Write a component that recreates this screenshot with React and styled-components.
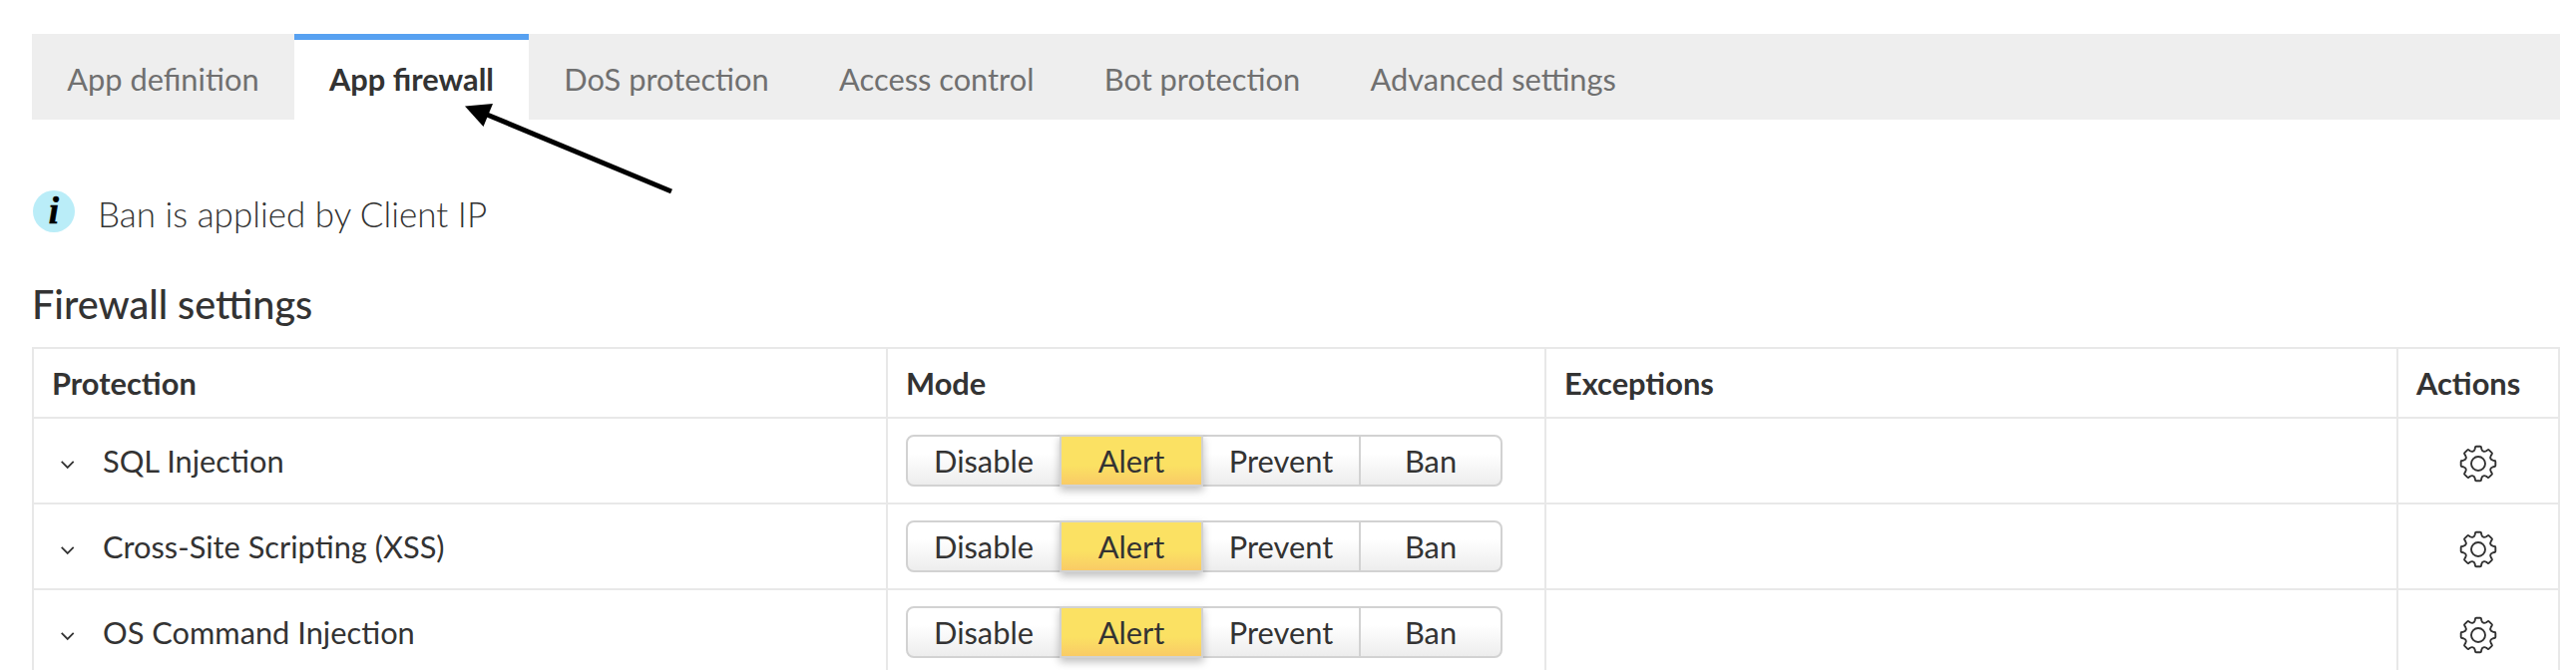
import React from "react";
import styled, { createGlobalStyle, css } from "styled-components";

const GlobalStyle = createGlobalStyle`
  *, *::before, *::after { box-sizing: border-box; }
  body {
    margin: 0;
    background: #fff;
    color: #333;
    font-family: Lato, "Open Sans", sans-serif;
    font-size: 30.8px;
    line-height: 40px;
  }
`;

const Page = styled.main`
  position: relative;
  height: 672px;
  overflow: hidden;
  padding: 34px 16px 0 32px;
`;

const TabBar = styled.nav`
  display: flex;
  height: 86px;
  background: #eee;
`;

const Tab = styled.button`
  border: 0;
  border-top: 6px solid transparent;
  padding: 0 35.2px;
  background: none;
  color: #707070;
  font: inherit;
  white-space: nowrap;
  ${(p) =>
    p.$active &&
    css`
      border-top-color: #57a1f1;
      background: #fff;
      color: #333;
      font-weight: 700;
    `}
`;

const Pointer = styled.svg`
  position: absolute;
  left: 460px;
  top: 98px;
`;

const Notice = styled.div`
  display: flex;
  align-items: center;
  margin-top: 71px;
  height: 42px;
`;

const InfoBadge = styled.span`
  display: flex;
  align-items: center;
  justify-content: center;
  width: 42px;
  height: 42px;
  margin-left: 1px;
  border-radius: 50%;
  background: #baedf8;
  color: #000;
  font: italic 700 37px/42px "Liberation Serif", serif;
  -webkit-text-stroke: 0.6px #000;
`;

const NoticeText = styled.span`
  margin-left: 23px;
  padding-top: 4px;
  font-size: 35px;
  font-weight: 300;
`;

const Heading = styled.h2`
  margin: 48px 0 0;
  height: 67px;
  font-size: 39.6px;
  line-height: 48px;
  font-weight: 500;
`;

const Table = styled.div`
  width: 2534px;
  border: 2px solid #e8e8e8;
`;

const Row = styled.div`
  display: grid;
  grid-template-columns: 854px 660px 854px 162px;
  height: ${(p) => (p.$head ? 68 : 86)}px;
  font-weight: ${(p) => (p.$head ? 700 : 400)};
  ${(p) => !p.$head && "border-top: 2px solid #e8e8e8;"}
`;

const Cell = styled.div`
  display: flex;
  align-items: center;
  justify-content: ${(p) => (p.$center ? "center" : "flex-start")};
  padding: ${(p) => (p.$center ? "2px 1px 0 0" : "2px 0 0 18px")};
  & + & {
    border-left: 2px solid #e8e8e8;
  }
`;

const Chevron = styled.svg`
  margin: 5px 27px 0 8px;
`;

const ButtonGroup = styled.div`
  display: flex;
  height: 52px;
  margin-top: -2px;
`;

const ModeButton = styled.button`
  width: ${(p) => p.$width}px;
  padding: 2px 0 0;
  border: 2px solid #d2d2d2;
  background: linear-gradient(#fff 0%, #fff 35%, #ededed 100%);
  color: #333;
  font: inherit;
  line-height: 46px;
  & + & {
    margin-left: -2px;
  }
  &:first-child {
    border-radius: 8px 0 0 8px;
  }
  &:last-child {
    border-radius: 0 8px 8px 0;
  }
  ${(p) =>
    p.$active &&
    css`
      z-index: 1;
      background: linear-gradient(#fbe163 0%, #fbe163 60%, #f9cb66 100%);
      box-shadow: 0 4px 8px rgba(0, 0, 0, 0.25);
    `}
`;

const GearSlot = styled.svg`
  margin-top: 3px;
`;

const gearPath = (() => {
  const place = (x, y, k) => {
    const a = (k * Math.PI) / 4;
    return `${(x * Math.cos(a) - y * Math.sin(a)).toFixed(2)} ${(
      x * Math.sin(a) +
      y * Math.cos(a)
    ).toFixed(2)}`;
  };
  let d = "";
  for (let k = 0; k < 8; k++) {
    const p = (x, y) => place(x, y, k);
    d += `${k ? "L" : "M"}${p(-2, -17.3)}L${p(2, -17.3)}Q${p(2.9, -17.3)} ${p(3, -16.4)}`;
    d += `L${p(3.3, -14.8)}Q${p(3.8, -12.9)} ${p(5.13, -12.38)}`;
    d += `Q${place(-3.8, -12.9, k + 1)} ${place(-3.3, -14.8, k + 1)}`;
    d += `L${place(-3, -16.4, k + 1)}Q${place(-2.9, -17.3, k + 1)} ${place(-2, -17.3, k + 1)}`;
  }
  return d + "Z";
})();

const Gear = () => (
  <GearSlot width="38" height="38" viewBox="-19 -19 38 38" fill="none" stroke="#333" strokeWidth="1.9">
    <path d={gearPath} strokeLinejoin="round" />
    <circle r="7" />
  </GearSlot>
);

const tabs = [
  "App definition",
  "App firewall",
  "DoS protection",
  "Access control",
  "Bot protection",
  "Advanced settings",
];
const modes = [
  ["Disable", 156],
  ["Alert", 144],
  ["Prevent", 160],
  ["Ban", 144],
];
const protections = [
  "SQL Injection",
  "Cross-Site Scripting (XSS)",
  "OS Command Injection",
];

export default function App() {
  return (
    <Page>
      <GlobalStyle />
      <TabBar>
        {tabs.map((t) => (
          <Tab key={t} $active={t === "App firewall"}>
            {t}
          </Tab>
        ))}
      </TabBar>
      <Notice>
        <InfoBadge>i</InfoBadge>
        <NoticeText>Ban is applied by Client IP</NoticeText>
      </Notice>
      <Heading>Firewall settings</Heading>
      <Table>
        <Row $head>
          <Cell>Protection</Cell>
          <Cell>Mode</Cell>
          <Cell>Exceptions</Cell>
          <Cell>Actions</Cell>
        </Row>
        {protections.map((name) => (
          <Row key={name}>
            <Cell>
              <Chevron width="16" height="10" viewBox="0 0 16 10" fill="none" stroke="#333" strokeWidth="1.8">
                <path d="M1.7 1.9L7.7 7.9L13.7 1.9" />
              </Chevron>
              {name}
            </Cell>
            <Cell>
              <ButtonGroup>
                {modes.map(([m, w]) => (
                  <ModeButton key={m} $width={w} $active={m === "Alert"}>
                    {m}
                  </ModeButton>
                ))}
              </ButtonGroup>
            </Cell>
            <Cell />
            <Cell $center>
              <Gear />
            </Cell>
          </Row>
        ))}
      </Table>
      <Pointer width="220" height="104" viewBox="460 98 220 104">
        <path d="M487 114.5L673 192" stroke="#000" strokeWidth="5" />
        <path d="M466 106.5L494 104L484.5 127Z" />
      </Pointer>
    </Page>
  );
}
